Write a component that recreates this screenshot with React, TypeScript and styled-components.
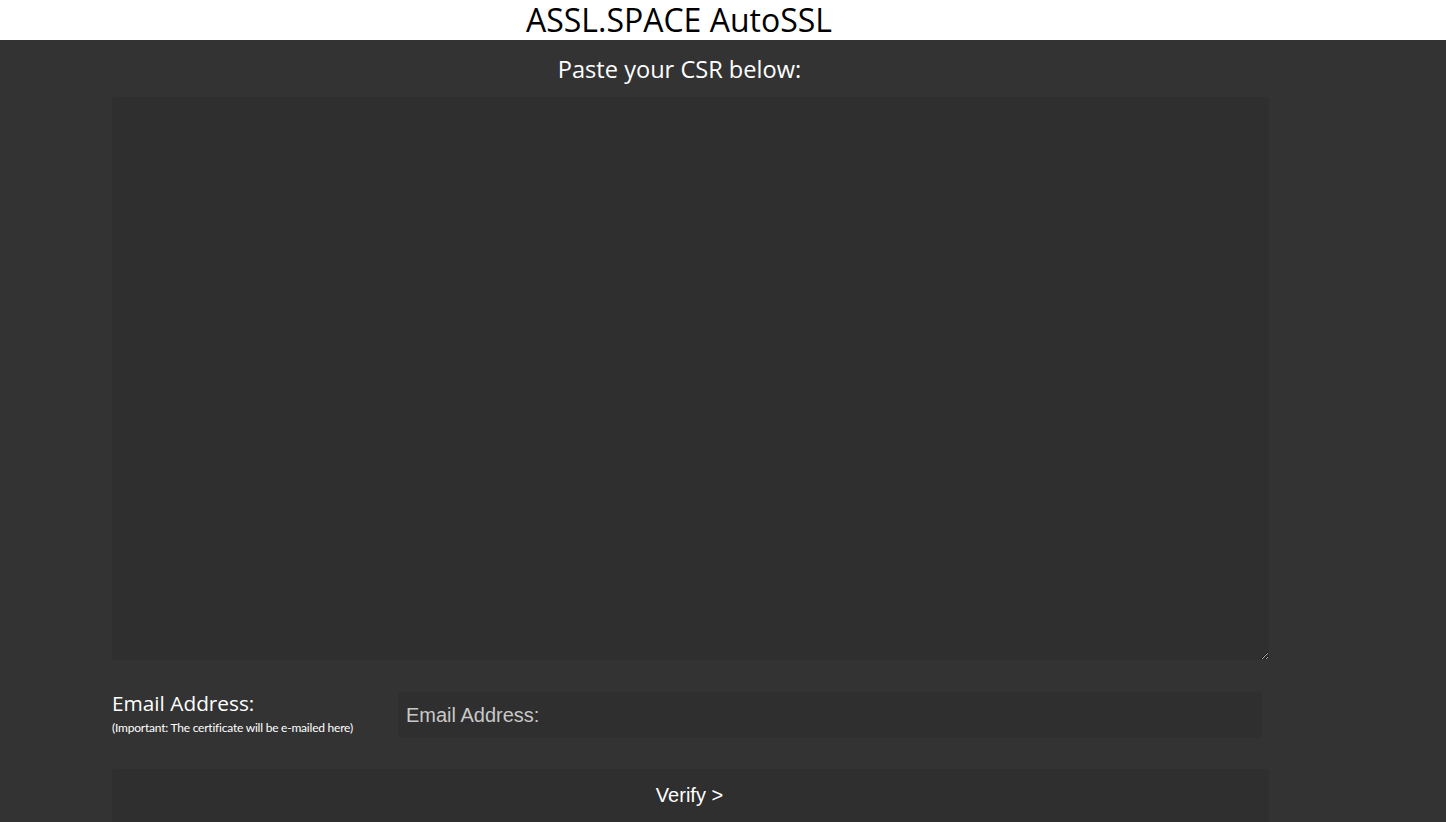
import React from 'react'
import styled, { createGlobalStyle } from 'styled-components'

const GlobalStyle = createGlobalStyle`
  html, body {
    margin: 0;
    padding: 0;
    background: #333333;
    font-family: "Open Sans", Arial, sans-serif;
    overflow: hidden;
  }
`

const Header = styled.header`
  height: 40px;
  background: #ffffff;
  display: flex;
  align-items: center;
  justify-content: center;
  padding-right: 88px;
`

const Title = styled.h1`
  margin: 0;
  font-family: "Open Sans", sans-serif;
  font-weight: 400;
  font-size: 32px;
  line-height: 40px;
  color: #000000;
`

const Main = styled.main`
  display: flex;
  flex-direction: column;
  padding: 0 177px 0 112px;
`

const Heading = styled.h2`
  margin: 0;
  height: 57px;
  display: flex;
  align-items: center;
  justify-content: center;
  padding-right: 22px;
  font-weight: 400;
  font-size: 23.6px;
  color: #ffffff;
`

const CsrBox = styled.textarea`
  box-sizing: border-box;
  width: 100%;
  height: 563px;
  margin: 0;
  border: none;
  border-radius: 4px;
  background: #2f2f2f;
  color: #ffffff;
  outline: none;
  display: block;
`

const EmailRow = styled.div`
  display: flex;
  align-items: flex-start;
  margin-top: 32px;
  padding-right: 7px;
`

const LabelBlock = styled.div`
  width: 286px;
  display: flex;
  flex-direction: column;
`

const Label = styled.label`
  font-size: 20.8px;
  font-weight: 500;
  line-height: 22px;
  color: #ffffff;
`

const Note = styled.span`
  margin-top: 6px;
  font-family: Lato, sans-serif;
  font-size: 12px;
  letter-spacing: -0.22px;
  color: #ffffff;
`

const EmailInput = styled.input`
  flex: 1;
  box-sizing: border-box;
  height: 46px;
  border: none;
  border-radius: 4px;
  background: #2f2f2f;
  padding: 0 8px;
  font-family: "Liberation Sans", Arial, sans-serif;
  font-size: 20px;
  color: #ffffff;
  outline: none;
  &::placeholder {
    color: #c8c8c8;
  }
`

const VerifyButton = styled.button`
  margin-top: 31px;
  height: 56px;
  border: none;
  border-radius: 4px;
  background: #2f2f2f;
  color: #ffffff;
  font-family: "Liberation Sans", Arial, sans-serif;
  font-size: 20px;
  display: flex;
  justify-content: center;
  align-items: flex-start;
  padding: 15px 2px 2px 0;
  cursor: pointer;
`

export default function App() {
  return (
    <>
      <GlobalStyle />
      <Header>
        <Title>ASSL.SPACE AutoSSL</Title>
      </Header>
      <Main>
        <Heading>Paste your CSR below:</Heading>
        <CsrBox />
        <EmailRow>
          <LabelBlock>
            <Label htmlFor="email">Email Address:</Label>
            <Note>(Important: The certificate will be e-mailed here)</Note>
          </LabelBlock>
          <EmailInput id="email" type="email" placeholder="Email Address:" />
        </EmailRow>
        <VerifyButton>Verify &gt;</VerifyButton>
      </Main>
    </>
  )
}
